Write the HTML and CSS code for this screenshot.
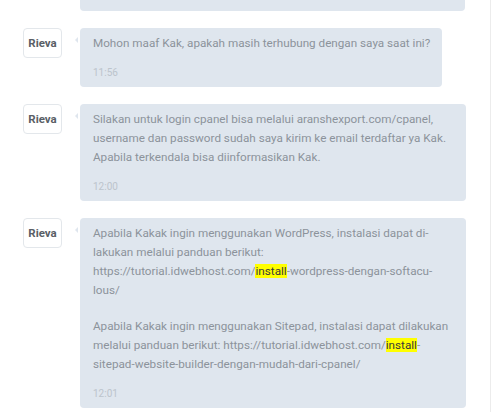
FILE: index.html
```html
<!DOCTYPE html>
<html lang="id">
<head>
<meta charset="utf-8">
<link rel="stylesheet" href="styles.css">
</head>
<body>
<div class="page">
  <div class="thread">
    <div class="row">
      <div class="avatar-space"></div>
      <div class="bubble bubble-stub"></div>
    </div>
    <div class="row">
      <div class="avatar">Rieva</div>
      <div class="bubble">
        <p class="text">Mohon maaf Kak, apakah masih terhubung dengan saya saat ini?</p>
        <div class="time">11:56</div>
      </div>
    </div>
    <div class="row">
      <div class="avatar">Rieva</div>
      <div class="bubble">
        <p class="text">Silakan untuk login cpanel bisa melalui aranshexport.com/cpanel, username dan password sudah saya kirim ke email terdaftar ya Kak. Apabila terkendala bisa diinformasikan Kak.</p>
        <div class="time">12:00</div>
      </div>
    </div>
    <div class="row">
      <div class="avatar">Rieva</div>
      <div class="bubble">
        <p class="text">Apabila Kakak ingin menggunakan WordPress, instalasi dapat di&shy;lakukan melalui panduan berikut: https://tutorial.idwebhost.com/<mark class="hl">install</mark>-wordpress-dengan-softacu&shy;lous/</p>
        <p class="text">Apabila Kakak ingin menggunakan Sitepad, instalasi dapat dilakukan melalui panduan berikut: https://tutorial.idwebhost.com/<mark class="hl">install</mark>-sitepad-website-builder-dengan-mudah-dari-cpanel/</p>
        <div class="time">12:01</div>
      </div>
    </div>
  </div>
</div>
</body>
</html>
```
FILE: styles.css
```css
html, body {
  margin: 0;
  padding: 0;
  background: #ffffff;
}
body {
  font-family: Roboto, "Liberation Sans", Arial, sans-serif;
}
.page {
  width: 490px;
  height: 412px;
  border-right: 1px solid #ececec;
  overflow: hidden;
}
.thread {
  display: flex;
  flex-direction: column;
  gap: 17.5px;
  padding-left: 23px;
}
.row {
  display: flex;
  align-items: flex-start;
  gap: 18px;
}
.avatar-space {
  width: 39px;
  flex: none;
}
.avatar {
  width: 37px;
  height: 28px;
  flex: none;
  border: 1px solid #e3e7eb;
  border-radius: 4px;
  display: flex;
  align-items: center;
  justify-content: center;
  font-size: 11.5px;
  font-weight: 700;
  color: #5a5f66;
  background: #fff;
}
.bubble {
  position: relative;
  background: #dfe6ee;
  border-radius: 4px;
  padding: 6px 12px 7px 13px;
  max-width: 361px;
}
.bubble::before {
  content: "";
  position: absolute;
  left: -5px;
  top: 9px;
  border-style: solid;
  border-width: 3px 3px 3px 0;
  border-color: transparent #dfe6ee transparent transparent;
}
.bubble-stub {
  width: 385px;
  max-width: none;
  height: 10.5px;
  padding: 0;
  border-radius: 0 0 4px 4px;
}
.bubble-stub::before {
  display: none;
}
.text {
  margin: 0 0 17px 0;
  font-size: 11.7px;
  line-height: 19px;
  color: #8c939b;
  hyphens: manual;
}
.text + .time {
  margin-top: -4.5px;
}
.time {
  font-size: 10px;
  line-height: 14px;
  color: #bcc4cc;
}
.hl {
  background: #ffff00;
  color: #3a3a3a;
}
```
